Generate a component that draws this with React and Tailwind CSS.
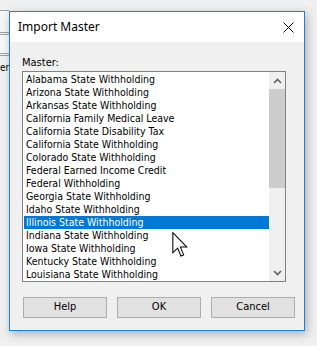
import React from 'react';

const items = [
  'Alabama State Withholding',
  'Arizona State Withholding',
  'Arkansas State Withholding',
  'California Family Medical Leave',
  'California State Disability Tax',
  'California State Withholding',
  'Colorado State Withholding',
  'Federal Earned Income Credit',
  'Federal Withholding',
  'Georgia State Withholding',
  'Idaho State Withholding',
  'Illinois State Withholding',
  'Indiana State Withholding',
  'Iowa State Withholding',
  'Kentucky State Withholding',
  'Louisiana State Withholding',
];

const uiFont = { fontFamily: '"DejaVu Sans Condensed", "DejaVu Sans", sans-serif' };

const Btn = ({ children }) => (
  <div className="w-[84px] h-[21px] border border-[#adadad] bg-[#e1e1e1] flex items-center justify-center text-[11px] text-black">
    {children}
  </div>
);

export default function App() {
  const [sel, setSel] = React.useState('Illinois State Withholding');
  return (
    <div className="w-[317px] h-[346px] bg-[#f0f0f0] relative overflow-hidden flex" style={uiFont}>
      {/* window behind the dialog */}
      <div className="w-[9px] shrink-0 flex flex-col">
        <div className="h-[11px] border-b border-[#a0a0a0]" />
        <div className="h-[21px] bg-[#f5f5f5]" />
        <div className="h-[3px] border-y border-[#a0a0a0]" />
        <div className="h-[18px] bg-[#f7f7f7]" />
        <div className="h-[3px] border-y border-[#a0a0a0]" />
        <div className="pt-[6px] text-[10px] leading-[12px] text-black">er</div>
      </div>

      <div className="mt-[11px] w-[296px] h-[320px] border border-[#1883d7] bg-[#f0f0f0] flex flex-col shadow-[2px_3px_9px_rgba(0,0,0,0.28)]">
        <div className="h-[30px] bg-white flex items-center justify-between pl-[8px] pr-[10px]">
          <span className="text-[12px] text-black" style={{ fontFamily: '"Noto Sans", "Open Sans", sans-serif' }}>Import Master</span>
          <svg width="11" height="11" viewBox="0 0 11 11">
            <path d="M0.5 0.5 L10.5 10.5 M10.5 0.5 L0.5 10.5" stroke="#000" strokeWidth="1" />
          </svg>
        </div>

        <div className="flex flex-col pl-[12px] pt-[14px]">
          <div className="text-[11px] leading-[13px] text-black h-[15px]">Master:</div>
          <div className="w-[264px] h-[211px] border border-[#828282] bg-white flex">
            <div className="flex-1 flex flex-col pl-[1px] pt-[1px]">
              {items.map(t => (
                <div
                  key={t}
                  onClick={() => setSel(t)}
                  className={`h-[13px] leading-[13px] text-[10.5px] pl-[2px] whitespace-nowrap overflow-hidden ${sel === t ? 'bg-[#0078d7] text-white' : 'text-black'}`}
                >
                  {t}
                </div>
              ))}
            </div>
            <div className="w-[16px] bg-[#f0f0f0] flex flex-col items-center">
              <div className="h-[17px] w-full flex items-center justify-center">
                <svg width="9" height="6" viewBox="0 0 9 6"><path d="M1 5 L4.5 1.5 L8 5" fill="none" stroke="#606060" strokeWidth="1.6" /></svg>
              </div>
              <div className="h-[99px] w-full bg-[#cdcdcd]" />
              <div className="flex-1" />
              <div className="h-[17px] w-full flex items-center justify-center">
                <svg width="9" height="6" viewBox="0 0 9 6"><path d="M1 1 L4.5 4.5 L8 1" fill="none" stroke="#606060" strokeWidth="1.6" /></svg>
              </div>
            </div>
          </div>
          <div className="flex pt-[15px] pl-[1px] gap-[10px]">
            <Btn>Help</Btn>
            <Btn>OK</Btn>
            <Btn>Cancel</Btn>
          </div>
        </div>
      </div>

      {/* mouse pointer */}
      <svg className="absolute left-[172px] top-[232px]" width="16" height="26" viewBox="0 0 12 20">
        <path d="M0.5 0.5 L0.5 16 L4.2 12.4 L6.7 18.5 L8.8 17.6 L6.3 11.6 L11.3 11.6 Z" fill="#fff" stroke="#000" strokeWidth="0.8" strokeLinejoin="miter" />
      </svg>
    </div>
  );
}
